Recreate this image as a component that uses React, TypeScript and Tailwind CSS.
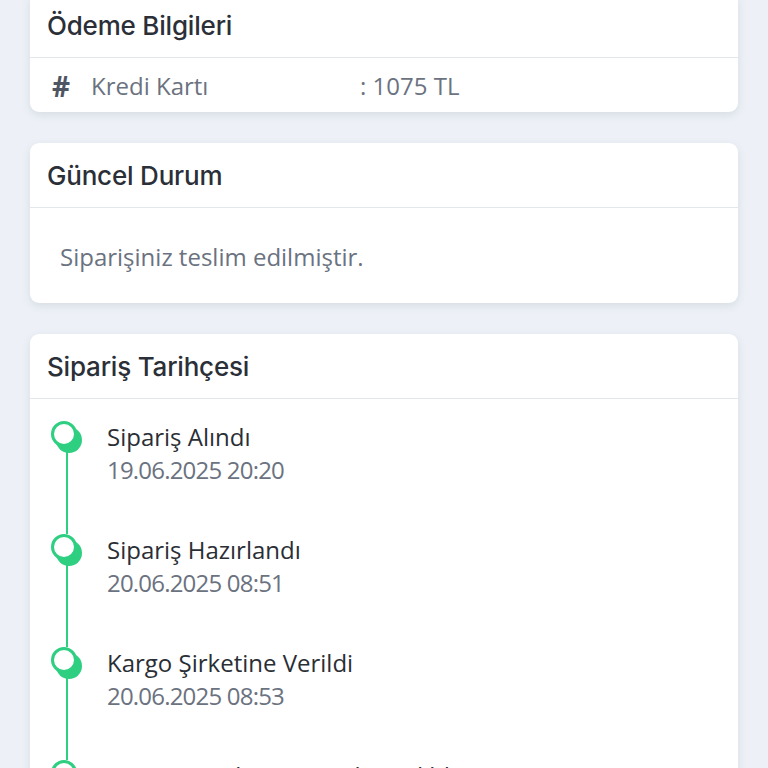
import React from "react";

const head = { fontFamily: "Inter, 'Noto Sans', sans-serif" };
const body = { fontFamily: "'Open Sans', 'Noto Sans', sans-serif" };

function CardHeader({ title }: { title: string }) {
  return (
    <div
      className="h-[65px] flex items-center pl-[17px] border-b border-[#e3e6eb] text-[26px] font-medium text-[#2b2f38] tracking-[-0.2px]"
      style={head}
    >
      {title}
    </div>
  );
}

const items = [
  { t: "Sipariş Alındı", d: "19.06.2025 20:20" },
  { t: "Sipariş Hazırlandı", d: "20.06.2025 08:51" },
  { t: "Kargo Şirketine Verildi", d: "20.06.2025 08:53" },
  { t: "DHL Sorumlusuna Teslim Edildi", d: "20.06.2025 14:12" },
];

export default function App() {
  return (
    <div className="min-h-[768px] bg-[#edf1f7] px-[30px] pb-10 overflow-hidden" style={body}>
      <div className="flex flex-col gap-[31px] -mt-[7px]">
        <div className="bg-white rounded-[9px] shadow-[0_3px_8px_rgba(60,70,90,0.12)]">
          <CardHeader title="Ödeme Bilgileri" />
          <div className="h-[54px] flex items-center pl-[22px] pt-[1px] text-[24px] text-[#6b7280]">
            <span className="w-[39px] font-bold text-[28px] text-[#4f5663]">#</span>
            <span className="w-[269px]">Kredi Kartı</span>
            <span>: 1075 TL</span>
          </div>
        </div>

        <div className="bg-white rounded-[9px] shadow-[0_3px_8px_rgba(60,70,90,0.12)]">
          <CardHeader title="Güncel Durum" />
          <div className="h-[95px] flex items-center pl-[30px] pt-[3px] text-[24px] text-[#6b7280]">
            Siparişiniz teslim edilmiştir.
          </div>
        </div>

        <div className="bg-white rounded-[9px] shadow-[0_3px_8px_rgba(60,70,90,0.12)]">
          <CardHeader title="Sipariş Tarihçesi" />
          <div className="pt-[22px]">
            {items.map((it, i) => (
              <div key={i} className="flex h-[113px]">
                <div className="w-[77px] pl-[21px] flex flex-col">
                  <div className="w-[26px] h-[26px] rounded-full bg-white border-[3px] border-[#2ecf80] shadow-[5px_6px_0_#2ecf80] shrink-0 relative z-10" />
                  <div className="ml-[15px] w-[2px] flex-1 bg-[#2ecf80]" />
                </div>
                <div>
                  <div className="text-[24px] leading-[32px] text-[#2a2e35]">{it.t}</div>
                  <div className="text-[24px] leading-[32px] mt-[1px] tracking-[-0.8px] text-[#6b7280]">{it.d}</div>
                </div>
              </div>
            ))}
          </div>
        </div>
      </div>
    </div>
  );
}
